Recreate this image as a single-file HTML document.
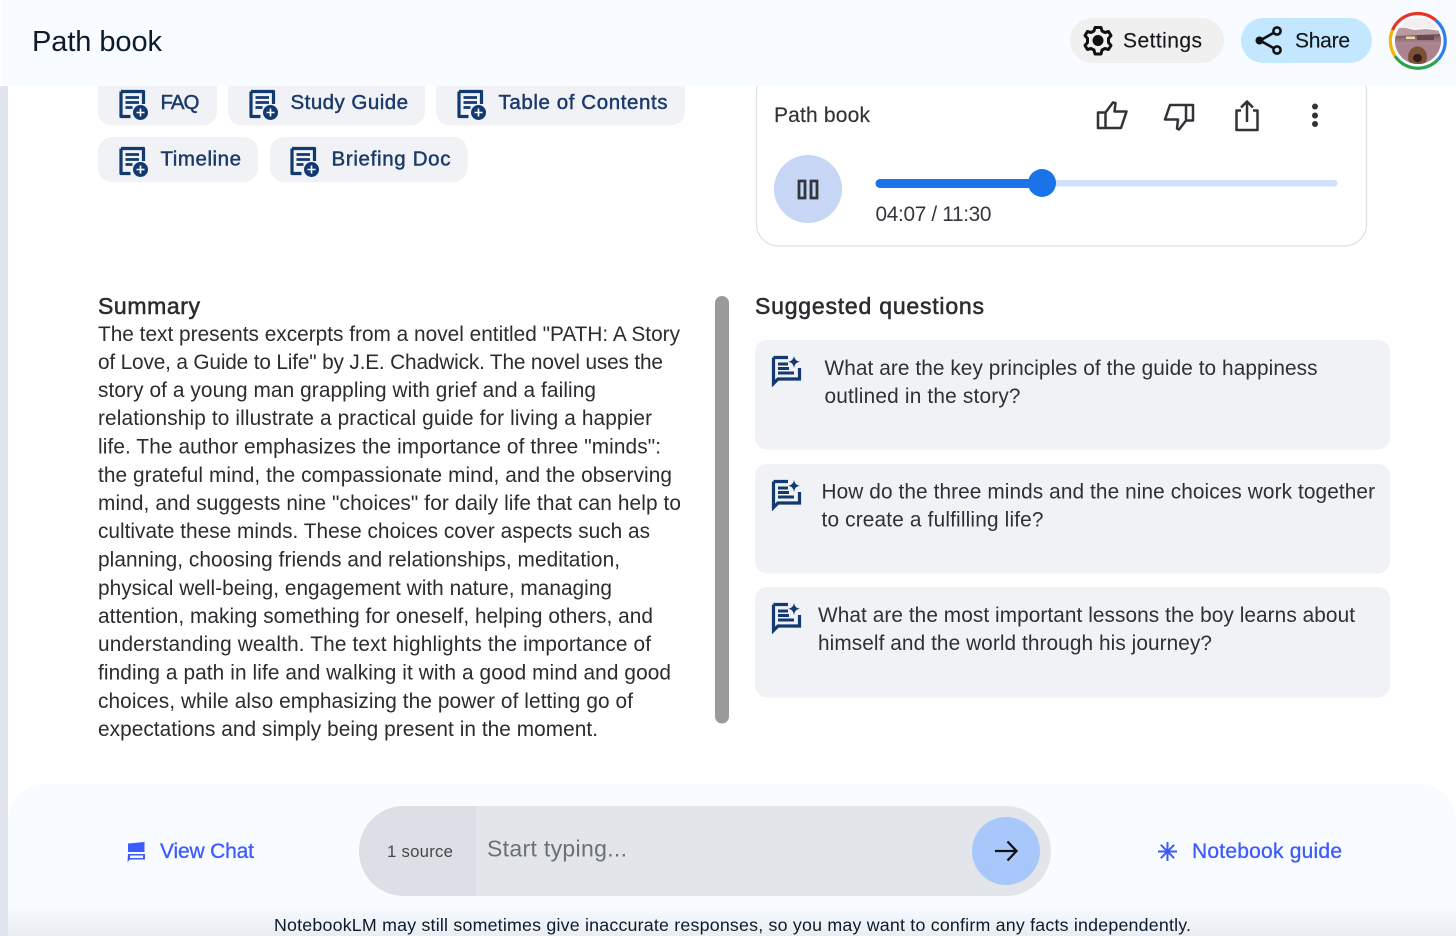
<!DOCTYPE html>
<html lang="en"><head><meta charset="utf-8"><title>Path book</title>
<style>
html,body{margin:0;padding:0;width:1456px;height:936px;overflow:hidden;background:#fff}
svg{display:block}
text{font-family:"Liberation Sans",sans-serif;dominant-baseline:alphabetic}
.chip{font-size:20.500px;fill:#1b3a6b;stroke:#1b3a6b;stroke-width:.45}
.sum{font-size:20.800px;fill:#2a2c30}
.q{font-size:20.800px;fill:#2d3034}
.blue{font-size:21px;fill:#3b5bff;stroke:#3b5bff;stroke-width:.3}
</style></head><body>
<svg width="1456" height="936" viewBox="0 0 1456 936" xmlns="http://www.w3.org/2000/svg">
<defs>
<g id="doc">
<path d="M1.500 1.500H24V14M11 26.500H1.500V1.500" fill="none" stroke="#123a70" stroke-width="3.200" stroke-linejoin="round"/>
<path d="M6 7.500H19.500M6 12.500H19.500M6 17.500H13" fill="none" stroke="#123a70" stroke-width="2.700"/>
<circle cx="21" cy="22.500" r="7.500" fill="#123a70"/>
<path d="M21 18.500V26.500M17 22.500H25" stroke="#fff" stroke-width="1.600"/>
</g>
<g id="qi">
<path d="M1.500 1.500H16M27.500 12V23H6L1.500 27.500V1.500" fill="none" stroke="#123a70" stroke-width="3.200"/>
<path d="M6 8H16M6 12.500H17M6 17H22" fill="none" stroke="#123a70" stroke-width="3"/>
<path d="M22 0C22.800 3.500 24 5 28 5.800C24 6.600 22.800 8 22 12C21.200 8 20 6.600 16 5.800C20 5 21.200 3.500 22 0Z" fill="#123a70"/>
</g>
<linearGradient id="bot" x1="0" y1="0" x2="0" y2="1"><stop offset="0" stop-color="#f8fbff"/><stop offset=".78" stop-color="#f8fbff"/><stop offset="1" stop-color="#eaedf1"/></linearGradient>
<linearGradient id="dirt" x1="0" y1="0" x2="0" y2="1"><stop offset="0" stop-color="#6f5557"/><stop offset="1" stop-color="#b58c98"/></linearGradient>
<clipPath id="av"><circle cx="1418" cy="41" r="23"/></clipPath>
</defs>

<rect x="0" y="0" width="8" height="936" fill="#e1e6ee"/>

<!-- chips -->
<rect x="98" y="70" width="119" height="55.500" rx="14" fill="#f0f2f6"/>
<rect x="228" y="70" width="197" height="55.500" rx="14" fill="#f0f2f6"/>
<rect x="436" y="70" width="249" height="55.500" rx="14" fill="#f0f2f6"/>
<rect x="98" y="137" width="160" height="45" rx="14" fill="#f0f2f6"/>
<rect x="270" y="137" width="197.500" height="45" rx="14" fill="#f0f2f6"/>
<use href="#doc" x="119.500" y="90"/><use href="#doc" x="249.500" y="90"/><use href="#doc" x="457.500" y="90"/>
<use href="#doc" x="119.500" y="147"/><use href="#doc" x="290.500" y="147"/>
<text class="chip" x="160.500" y="109" textLength="39" lengthAdjust="spacing">FAQ</text>
<text class="chip" x="290.500" y="109" textLength="117.500" lengthAdjust="spacing">Study Guide</text>
<text class="chip" x="498.500" y="109" textLength="169" lengthAdjust="spacing">Table of Contents</text>
<text class="chip" x="160.500" y="165.500" textLength="80.500" lengthAdjust="spacing">Timeline</text>
<text class="chip" x="331.500" y="165.500" textLength="119" lengthAdjust="spacing">Briefing Doc</text>

<!-- player card -->
<rect x="756.500" y="68" width="610" height="178" rx="22" fill="#fff" stroke="#e0e1e3" stroke-width="1.300"/>
<text x="774" y="122" font-size="21" fill="#303236" stroke="#303236" stroke-width=".15" textLength="96" lengthAdjust="spacing">Path book</text>
<path d="M1098 112.500H1105.500V128H1098ZM1105.500 112.500L1113 102.500L1115.500 103L1114.500 111.500H1126.500L1121 128H1105.500" fill="none" stroke="#303438" stroke-width="2.500" stroke-linejoin="round"/>
<path d="M1193 105H1186V120.500H1193ZM1186 105H1170L1165 119.500H1178L1177 128.500L1179 129.500L1186 120.500" fill="none" stroke="#303438" stroke-width="2.500" stroke-linejoin="round"/>
<path d="M1241 110.500H1236.500V130H1257.500V110.500H1253M1247 122V102M1241 107.500L1247 101.500L1253 107.500" fill="none" stroke="#303438" stroke-width="2.500" stroke-linejoin="round"/>
<circle cx="1315" cy="106.500" r="3" fill="#303438"/><circle cx="1315" cy="115.500" r="3" fill="#303438"/><circle cx="1315" cy="124" r="3" fill="#303438"/>
<circle cx="808" cy="189" r="34" fill="#c6d6f4"/>
<path d="M799 181H805V198H799ZM811 181H817V198H811Z" fill="none" stroke="#33363c" stroke-width="2.800"/>
<rect x="1040" y="180" width="297.500" height="6.500" rx="3.200" fill="#d0e1fb"/>
<rect x="875.500" y="179" width="166" height="9" rx="4.500" fill="#1a73e8"/>
<circle cx="1042" cy="183" r="14" fill="#1a73e8"/>
<text x="875.500" y="221" font-size="20.800" fill="#33363a" textLength="116" lengthAdjust="spacing">04:07 / 11:30</text>

<!-- summary -->
<text x="98" y="314" font-size="23" fill="#2a2c30" stroke="#2a2c30" stroke-width=".55" textLength="102" lengthAdjust="spacing">Summary</text>
<text class="sum" x="98" y="341" textLength="582" lengthAdjust="spacing">The text presents excerpts from a novel entitled "PATH: A Story</text>
<text class="sum" x="98" y="369" textLength="565" lengthAdjust="spacing">of Love, a Guide to Life" by J.E. Chadwick. The novel uses the</text>
<text class="sum" x="98" y="397" textLength="498" lengthAdjust="spacing">story of a young man grappling with grief and a failing</text>
<text class="sum" x="98" y="425" textLength="554" lengthAdjust="spacing">relationship to illustrate a practical guide for living a happier</text>
<text class="sum" x="98" y="453.500" textLength="563" lengthAdjust="spacing">life. The author emphasizes the importance of three "minds":</text>
<text class="sum" x="98" y="482" textLength="574" lengthAdjust="spacing">the grateful mind, the compassionate mind, and the observing</text>
<text class="sum" x="98" y="510" textLength="583" lengthAdjust="spacing">mind, and suggests nine "choices" for daily life that can help to</text>
<text class="sum" x="98" y="538" textLength="552" lengthAdjust="spacing">cultivate these minds. These choices cover aspects such as</text>
<text class="sum" x="98" y="566.500" textLength="522" lengthAdjust="spacing">planning, choosing friends and relationships, meditation,</text>
<text class="sum" x="98" y="595" textLength="514" lengthAdjust="spacing">physical well-being, engagement with nature, managing</text>
<text class="sum" x="98" y="623" textLength="555" lengthAdjust="spacing">attention, making something for oneself, helping others, and</text>
<text class="sum" x="98" y="651" textLength="553" lengthAdjust="spacing">understanding wealth. The text highlights the importance of</text>
<text class="sum" x="98" y="679.500" textLength="573" lengthAdjust="spacing">finding a path in life and walking it with a good mind and good</text>
<text class="sum" x="98" y="708" textLength="535" lengthAdjust="spacing">choices, while also emphasizing the power of letting go of</text>
<text class="sum" x="98" y="736" textLength="500" lengthAdjust="spacing">expectations and simply being present in the moment.</text>
<rect x="715" y="296" width="14" height="427.500" rx="7" fill="#9a9a9a"/>

<!-- questions -->
<text x="755" y="314" font-size="23" fill="#2a2c30" stroke="#2a2c30" stroke-width=".55" textLength="229" lengthAdjust="spacing">Suggested questions</text>
<rect x="755" y="340" width="635" height="109.500" rx="12" fill="#f0f2f6"/>
<rect x="755" y="464" width="635" height="109.500" rx="12" fill="#f0f2f6"/>
<rect x="755" y="587" width="635" height="110.500" rx="12" fill="#f0f2f6"/>
<use href="#qi" x="772" y="356"/><use href="#qi" x="772" y="480"/><use href="#qi" x="772" y="603"/>
<text class="q" x="824.500" y="375" textLength="493" lengthAdjust="spacing">What are the key principles of the guide to happiness</text>
<text class="q" x="824.500" y="403" textLength="196" lengthAdjust="spacing">outlined in the story?</text>
<text class="q" x="821.500" y="498.500" textLength="553.500" lengthAdjust="spacing">How do the three minds and the nine choices work together</text>
<text class="q" x="821.500" y="526.500" textLength="222" lengthAdjust="spacing">to create a fulfilling life?</text>
<text class="q" x="818" y="622" textLength="537" lengthAdjust="spacing">What are the most important lessons the boy learns about</text>
<text class="q" x="818" y="650" textLength="394" lengthAdjust="spacing">himself and the world through his journey?</text>

<!-- header -->
<rect x="2" y="0" width="1454" height="86" fill="#f8fbff"/>
<rect x="0" y="0" width="2" height="86" fill="#fff"/>
<text x="32" y="51" font-size="29px" fill="#0b1a2c" textLength="130" lengthAdjust="spacing">Path book</text>
<rect x="1070" y="18" width="154" height="45" rx="22.500" fill="#f0f0f0"/>
<path d="M1095 27.500H1101L1102 31L1105 32.500L1108.500 31.500L1111 35.500L1108.500 38.500V42.500L1111 45.500L1108.500 49.500L1105 48.500L1102 50L1101 54H1095L1094 50L1091 48.500L1087.500 49.500L1085 45.500L1087.500 42.500V38.500L1085 35.500L1087.500 31.500L1091 32.500L1094 31Z" fill="none" stroke="#111" stroke-width="3" stroke-linejoin="round"/>
<circle cx="1098" cy="40.500" r="5.500" fill="#111"/>
<text x="1123" y="47.500" font-size="21" fill="#15171a" stroke="#15171a" stroke-width=".15" textLength="79" lengthAdjust="spacing">Settings</text>
<rect x="1241" y="18" width="131" height="45" rx="22.500" fill="#c2e7ff"/>
<path d="M1277 31L1260 40.500L1277 50" fill="none" stroke="#111" stroke-width="2.600"/>
<circle cx="1277" cy="31" r="3.600" fill="#c2e7ff" stroke="#111" stroke-width="2.600"/>
<circle cx="1277" cy="50" r="3.600" fill="#c2e7ff" stroke="#111" stroke-width="2.600"/>
<circle cx="1259.500" cy="40.500" r="4" fill="#111"/>
<text x="1295" y="47.500" font-size="21" fill="#15171a" stroke="#15171a" stroke-width=".15" textLength="55" lengthAdjust="spacing">Share</text>

<!-- avatar -->
<rect x="1390" y="14" width="56" height="56" fill="#f8fbff"/>
<g clip-path="url(#av)">
<rect x="1394" y="18" width="48" height="10" fill="#f4eeee"/>
<path d="M1394 28L1406 28L1414 30L1426 29L1442 31V44H1394Z" fill="#b89aa0"/>
<path d="M1394 36L1442 34V44H1394Z" fill="url(#dirt)"/>
<rect x="1394" y="44" width="48" height="20" fill="#a9838e"/>
<rect x="1406" y="36.500" width="9" height="2.500" fill="#f1d7a6"/>
<rect x="1417" y="35" width="17" height="5" fill="#63494a"/>
<ellipse cx="1417.500" cy="57" rx="9.500" ry="10.500" fill="#7b5238"/>
<ellipse cx="1417.500" cy="58" rx="4.500" ry="4" fill="#2e1f18"/>
</g>
<g fill="none" stroke-width="3.200">
<path d="M1392.500 30A27.500 27.500 0 0 1 1435.500 20" stroke="#ea3323"/>
<path d="M1435.500 20A27.500 27.500 0 0 1 1438 59.500" stroke="#2f7bf0"/>
<path d="M1438 59.500A27.500 27.500 0 0 1 1395 56" stroke="#2ba24c"/>
<path d="M1395 56A27.500 27.500 0 0 1 1392.500 30" stroke="#f5b400"/>
</g>

<!-- bottom panel -->
<path d="M8 936V820A36 36 0 0 1 44 784H1420A36 36 0 0 1 1456 820V936Z" fill="url(#bot)"/>
<path d="M128 843.500L144.500 842V852H128ZM128 854H145V859.500H130L127.500 862Z" fill="#3b5bff"/>
<path d="M130 855.500H143V858H130Z" fill="#f8fbff"/>
<text class="blue" x="160" y="858" textLength="94" lengthAdjust="spacing">View Chat</text>
<rect x="359" y="806" width="692" height="90" rx="45" fill="#e2e6ea"/>
<path d="M476 806H404A45 45 0 0 0 404 896H476Z" fill="#dcdfe5"/>
<text x="387" y="857" font-size="16.800" fill="#45484c" textLength="66" lengthAdjust="spacing">1 source</text>
<text x="487" y="856.500" font-size="23" fill="#6b7074" textLength="140" lengthAdjust="spacing">Start typing...</text>
<circle cx="1006" cy="851" r="34" fill="#a8c7fa"/>
<path d="M995 851H1016M1007.500 841.500L1016.500 851L1007.500 860.500" fill="none" stroke="#111" stroke-width="2.300"/>
<path d="M1167.500 842V861M1158 851.500H1177M1160.800 844.800L1174.200 858.200M1174.200 844.800L1160.800 858.200" stroke="#3b5bff" stroke-width="2" fill="none"/>
<text class="blue" x="1192" y="858" textLength="150" lengthAdjust="spacing">Notebook guide</text>
<text x="274" y="931" font-size="17.800" fill="#0c1a2b" textLength="917" lengthAdjust="spacing">NotebookLM may still sometimes give inaccurate responses, so you may want to confirm any facts independently.</text>
</svg>
</body></html>
